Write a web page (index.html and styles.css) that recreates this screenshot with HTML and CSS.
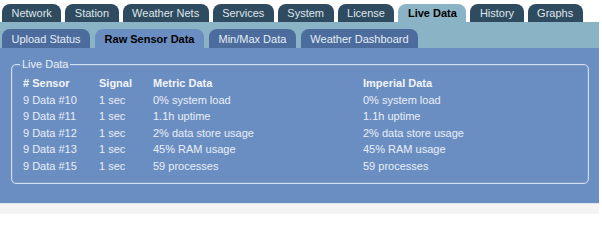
FILE: index.html
```html
<!DOCTYPE html>
<html lang="en">
<head>
<meta charset="utf-8">
<title>Live Data - Raw Sensor Data</title>
<link rel="stylesheet" href="styles.css">
</head>
<body>
<div class="page">
  <ul class="tabs">
    <li class="tab">Network</li>
    <li class="tab">Station</li>
    <li class="tab">Weather Nets</li>
    <li class="tab">Services</li>
    <li class="tab">System</li>
    <li class="tab">License</li>
    <li class="tab active">Live Data</li>
    <li class="tab">History</li>
    <li class="tab">Graphs</li>
  </ul>
  <div class="band">
    <ul class="subtabs">
      <li class="subtab">Upload Status</li>
      <li class="subtab active">Raw Sensor Data</li>
      <li class="subtab">Min/Max Data</li>
      <li class="subtab">Weather Dashboard</li>
    </ul>
  </div>
  <div class="panel">
    <fieldset class="box">
      <legend class="box-title">Live Data</legend>
      <div class="grid">
        <div class="th"># Sensor</div><div class="th">Signal</div><div class="th">Metric Data</div><div class="th">Imperial Data</div>
        <div>9 Data #10</div><div>1 sec</div><div>0% system load</div><div>0% system load</div>
        <div>9 Data #11</div><div>1 sec</div><div>1.1h uptime</div><div>1.1h uptime</div>
        <div>9 Data #12</div><div>1 sec</div><div>2% data store usage</div><div>2% data store usage</div>
        <div>9 Data #13</div><div>1 sec</div><div>45% RAM usage</div><div>45% RAM usage</div>
        <div>9 Data #15</div><div>1 sec</div><div>59 processes</div><div>59 processes</div>
      </div>
    </fieldset>
  </div>
  <div class="footer"></div>
</div>
</body>
</html>
```
FILE: styles.css
```css
html, body {
  margin: 0;
  padding: 0;
  background: #ffffff;
}
body {
  font-family: "Liberation Sans", Arial, sans-serif;
  font-size: 11px;
}
.page {
  width: 599px;
}
.tabs {
  list-style: none;
  margin: 0;
  padding: 4px 0 0 2px;
  display: flex;
  gap: 4px;
}
.tab {
  height: 18px;
  line-height: 18px;
  padding: 0 9.5px;
  background: #2f4b5f;
  color: #dfe6ec;
  border-radius: 8px 8px 0 0;
  white-space: nowrap;
}
.tab.active {
  background: #8ab4c5;
  color: #000;
  font-weight: bold;
}
.band {
  background: #8ab4c5;
  height: 26px;
  box-sizing: border-box;
  padding-top: 7px;
}
.subtabs {
  list-style: none;
  margin: 0;
  padding: 0 0 0 2px;
  display: flex;
  gap: 5px;
}
.subtab {
  height: 19px;
  line-height: 20px;
  padding: 0 9.5px;
  background: #4b6c9d;
  color: #e6ecf4;
  border-radius: 8px 8px 0 0;
  white-space: nowrap;
}
.subtab.active {
  background: #6b8ec2;
  color: #000;
  font-weight: bold;
}
.panel {
  background: #6b8ec2;
  padding: 9px 10px 19px 11px;
  border-bottom: 1px solid #dbe4ef;
}
.box {
  margin: 0;
  padding: 4px 12px 8px 11px;
  border: 1px solid #d3deee;
  border-radius: 5px;
  box-shadow: inset 0 0 0 1px rgba(255,255,255,0.12);
}
.box-title {
  margin-left: -3px;
  padding: 0 2px;
  line-height: 14px;
  color: #e9eef7;
}
.grid {
  display: grid;
  grid-template-columns: 76px 54px 210px 1fr;
  line-height: 16.6px;
  color: #e9eef7;
}
.th {
  font-weight: bold;
  color: #f2f5fa;
}
.footer {
  height: 10px;
  background: #f4f4f4;
}
```
